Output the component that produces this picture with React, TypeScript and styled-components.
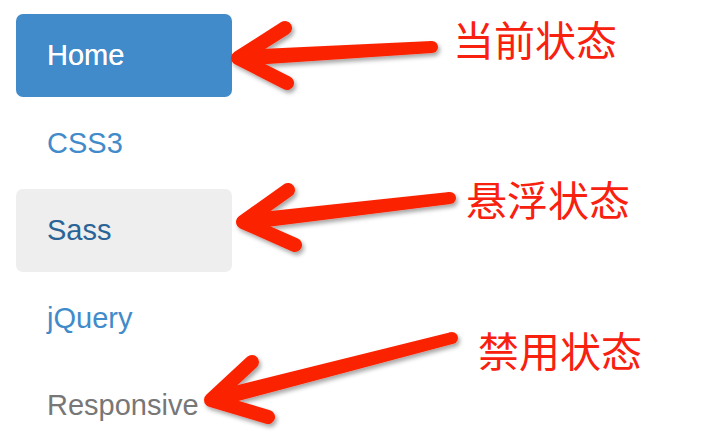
import * as React from 'react'
import styled, { createGlobalStyle, css } from 'styled-components'

const GlobalStyle = createGlobalStyle`
	html, body {
		margin: 0;
		padding: 0;
		background: #fff;
	}
	body {
		font-family: 'Liberation Sans', Arial, sans-serif;
	}
`

const Canvas = styled.div`
	position: relative;
	width: 724px;
	height: 444px;
	overflow: hidden;
	background: #fff;
`

const NavList = styled.ul`
	list-style: none;
	margin: 0;
	padding: 14px 0 0 16px;
	width: 216px;
	display: flex;
	flex-direction: column;
	gap: 4.5px;
`

type ItemState = 'active' | 'normal' | 'hover' | 'disabled'

interface NavLinkProps {
	$state: ItemState
}

const NavLink = styled.a`
	display: flex;
	align-items: center;
	height: 83px;
	padding: 0 31px;
	box-sizing: border-box;
	border-radius: 7px;
	font-size: 29px;
	text-decoration: none;
	color: #428bca;
	${({ $state }: NavLinkProps) => {
		switch ($state) {
			case 'active':
				return css`
					background: #428bca;
					color: #fff;
					text-shadow: 0 0 0.6px #fff;
				`
			case 'hover':
				return css`
					background: #eee;
					color: #2a6496;
				`
			case 'disabled':
				return css`
					color: #777;
				`
			default:
				return css``
		}
	}}
`

/* annotation layer sits on top of the nav */
const Overlay = styled.div`
	position: absolute;
	inset: 0;
	pointer-events: none;
`

interface LabelProps {
	$x: number
	$y: number
}

const Label = styled.span`
	position: absolute;
	left: ${({ $x }: LabelProps) => $x}px;
	top: ${({ $y }: LabelProps) => $y}px;
	font-family: 'Noto Sans CJK SC', 'Noto Sans', sans-serif;
	font-size: 41px;
	line-height: 1;
	color: #f8200f;
	white-space: nowrap;
`

const ArrowLayer = styled.svg`
	position: absolute;
	left: 0;
	top: 0;
`

const items: { text: string; state: ItemState }[] = [
	{ text: 'Home', state: 'active' },
	{ text: 'CSS3', state: 'normal' },
	{ text: 'Sass', state: 'hover' },
	{ text: 'jQuery', state: 'normal' },
	{ text: 'Responsive', state: 'disabled' },
]

type Pt = [number, number]

const arrows: { tip: Pt; up: Pt; down: Pt; end: Pt }[] = [
	{ tip: [238, 58], up: [285, 28], down: [287, 83], end: [432, 47] },
	{ tip: [243, 222], up: [288, 190], down: [295, 245], end: [450, 198] },
	{ tip: [211, 400], up: [252, 362], down: [268, 417], end: [452, 338] },
]

const RED = '#fb2400'

// shaft gets a bit thicker toward the head, like a hand-drawn marker arrow
const shaft = (tip: Pt, end: Pt) => {
	const dx = tip[0] - end[0]
	const dy = tip[1] - end[1]
	const len = Math.hypot(dx, dy)
	const nx = -dy / len
	const ny = dx / len
	const pts = [
		[end[0] + nx * 6, end[1] + ny * 6],
		[tip[0] + nx * 8, tip[1] + ny * 8],
		[tip[0] - nx * 8, tip[1] - ny * 8],
		[end[0] - nx * 6, end[1] - ny * 6],
	]
	return pts.map((p) => p.join(',')).join(' ')
}

const Arrow = ({ tip, up, down, end }: { tip: Pt; up: Pt; down: Pt; end: Pt }) => (
	<g filter="url(#shadow)">
		<polygon points={shaft(tip, end)} fill={RED} />
		<circle cx={end[0]} cy={end[1]} r={6} fill={RED} />
		<path
			d={`M${up[0]} ${up[1]} L${tip[0]} ${tip[1]} L${down[0]} ${down[1]}`}
			stroke={RED}
			strokeWidth={14}
			strokeLinecap="round"
			strokeLinejoin="round"
			fill="none"
		/>
	</g>
)

export default function App() {
	return (
		<Canvas>
			<GlobalStyle />
			<NavList>
				{items.map((item) => (
					<li key={item.text}>
						<NavLink $state={item.state} href="#">
							{item.text}
						</NavLink>
					</li>
				))}
			</NavList>
			<Overlay>
				<ArrowLayer width={724} height={444} viewBox="0 0 724 444">
					<defs>
						<filter id="shadow" x="-20%" y="-40%" width="140%" height="180%">
							<feDropShadow dx="2" dy="3" stdDeviation="2" floodColor="#000" floodOpacity="0.35" />
						</filter>
					</defs>
					{arrows.map((a, i) => (
						<Arrow key={i} {...a} />
					))}
				</ArrowLayer>
				<Label $x={453} $y={18}>当前状态</Label>
				<Label $x={466} $y={178}>悬浮状态</Label>
				<Label $x={478} $y={329}>禁用状态</Label>
			</Overlay>
		</Canvas>
	)
}
